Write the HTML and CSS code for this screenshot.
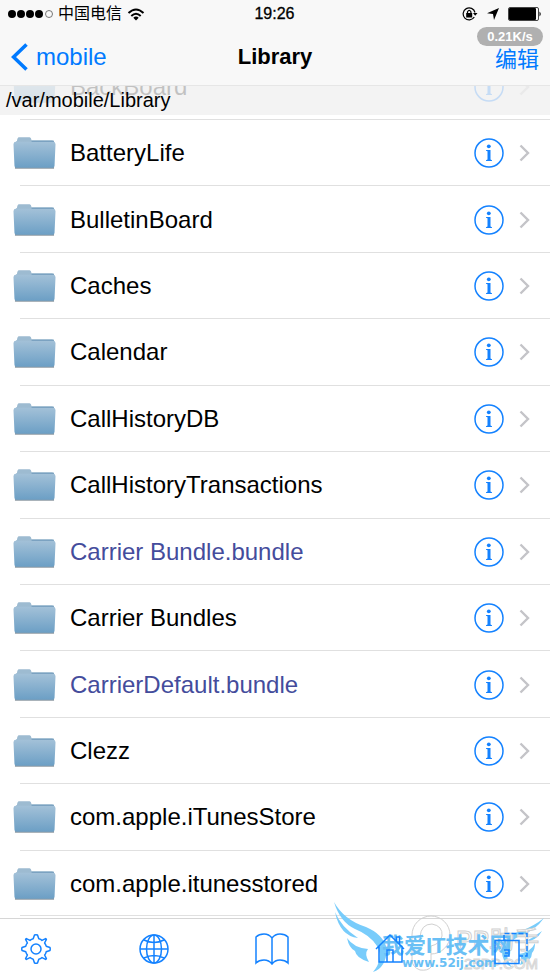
FILE: index.html
```
<!DOCTYPE html>
<html lang="zh-CN">
<head>
  <meta charset="UTF-8">
  <meta name="viewport" content="width=device-width, initial-scale=1">
  <title>Library</title>
  <link rel="stylesheet" href="styles.css">
</head>
<body>
  <!-- shared icons -->
  <svg class="defs" width="0" height="0" aria-hidden="true">
    <defs>
      <linearGradient id="folderFront" x1="0" y1="0" x2="0" y2="1">
        <stop offset="0" stop-color="#a3c1d8"/>
        <stop offset="1" stop-color="#6c9fc5"/>
      </linearGradient>
      <symbol id="folder" viewBox="0 0 44 34">
        <path d="M4 5 Q4.500 1 6 1 H17 Q18.500 1 19 4 H40 Q42 4 42 6 V12 H3 V5 Z" fill="#9dbbd1"/>
        <path d="M2 31 H42 V33 H2 Z" fill="#8e9aa3"/>
        <path d="M0.500 8 Q0.500 5.500 3 5.500 H41 Q43.500 5.500 43.500 8 L42.500 30 Q42.500 32 40.500 32 H3.500 Q1.500 32 1.500 30 Z" fill="url(#folderFront)"/>
        <path d="M19 5 H42" stroke="#6f9abb" stroke-width="1"/>
      </symbol>
      <symbol id="info" viewBox="0 0 30 30">
        <circle cx="15" cy="15" r="14" fill="none" stroke="#1482ff" stroke-width="1.500"/>
        <circle cx="14.800" cy="8.300" r="1.900" fill="#1482ff"/>
        <path d="M12 12 H16.500 V21.500 L18 22.200 V23 H12 V22.200 L13.500 21.500 V13.300 L12 12.800 Z" fill="#1482ff"/>
      </symbol>
      <symbol id="chevron" viewBox="0 0 11 18">
        <path d="M1.500 1.500 L9 9 L1.500 16.500" fill="none" stroke="#c4c4c8" stroke-width="2.400"/>
      </symbol>
    </defs>
  </svg>

  <header class="header">
    <div class="status">
      <div class="carrier">
        <svg width="46" height="10" viewBox="0 0 46 10">
          <g fill="#000">
            <circle cx="5" cy="5" r="4"/>
            <circle cx="14" cy="5" r="4"/>
            <circle cx="23" cy="5" r="4"/>
            <circle cx="32" cy="5" r="4"/>
          </g>
          <circle cx="42" cy="5" r="3.500" fill="none" stroke="#555" stroke-width="0.800"/>
        </svg>
        <span>中国电信</span>
        <svg width="18" height="13" viewBox="0 0 18 13">
          <path d="M1.500 5 Q9 -2 16.500 5 M4.300 8 Q9 3.600 13.700 8" fill="none" stroke="#000" stroke-width="2"/>
          <path d="M6.300 9.700 Q9 7.500 11.700 9.700 L9 12.500 Z"/>
        </svg>
      </div>
      <time class="clock">19:26</time>
      <div class="indicators">
        <svg width="16" height="14" viewBox="0 0 16 14">
          <path d="M12.300 10 A6 6 0 1 1 13 5.500" fill="none" stroke="#000" stroke-width="1.200"/>
          <path d="M11 6 H15.500 L13.200 8.800 Z"/>
          <rect x="4.200" y="6" width="6" height="4.500"/>
          <path d="M5.500 6.500 V4.800 Q7.200 2 8.900 4.800 V6.500" fill="none" stroke="#000" stroke-width="1.200"/>
        </svg>
        <svg width="12" height="12" viewBox="0 0 12 12">
          <path d="M12 0 L7 12 L6 6 L0 5.200 Z"/>
        </svg>
        <svg width="34" height="14" viewBox="0 0 34 14">
          <rect x="0.500" y="0.500" width="30" height="13" rx="1.500" fill="none" stroke="#444"/>
          <rect x="1" y="1" width="27" height="12" rx="1"/>
          <path d="M31.500 4.500 Q34 7 31.500 9.500 Z"/>
        </svg>
      </div>
    </div>
    <nav class="navbar">
      <a class="back" href="#">
        <svg width="17" height="28" viewBox="0 0 17 28">
          <path d="M15.500 1.500 L2.500 14 L15.500 26.500" fill="none" stroke="#007aff" stroke-width="3.600"/>
        </svg>
        <span>mobile</span>
      </a>
      <h1 class="title">Library</h1>
      <button class="edit" type="button">编辑</button>
    </nav>
    <span class="speed">0.21K/s</span>
  </header>

  <div class="path">
    <div class="under" aria-hidden="true">
      <svg class="folder"><use href="#folder"/></svg>
      <span class="name">BackBoard</span>
      <svg class="info-icon"><use href="#info"/></svg>
      <svg class="chevron"><use href="#chevron"/></svg>
    </div>
    <span class="path-text">/var/mobile/Library</span>
  </div>

  <ul class="list">
    <li class="row">
      <svg class="folder"><use href="#folder"/></svg>
      <a class="name" href="#">BatteryLife</a>
      <button class="info" type="button" aria-label="Info"><svg class="info-icon"><use href="#info"/></svg></button>
      <svg class="chevron"><use href="#chevron"/></svg>
    </li>
    <li class="row">
      <svg class="folder"><use href="#folder"/></svg>
      <a class="name" href="#">BulletinBoard</a>
      <button class="info" type="button" aria-label="Info"><svg class="info-icon"><use href="#info"/></svg></button>
      <svg class="chevron"><use href="#chevron"/></svg>
    </li>
    <li class="row">
      <svg class="folder"><use href="#folder"/></svg>
      <a class="name" href="#">Caches</a>
      <button class="info" type="button" aria-label="Info"><svg class="info-icon"><use href="#info"/></svg></button>
      <svg class="chevron"><use href="#chevron"/></svg>
    </li>
    <li class="row">
      <svg class="folder"><use href="#folder"/></svg>
      <a class="name" href="#">Calendar</a>
      <button class="info" type="button" aria-label="Info"><svg class="info-icon"><use href="#info"/></svg></button>
      <svg class="chevron"><use href="#chevron"/></svg>
    </li>
    <li class="row">
      <svg class="folder"><use href="#folder"/></svg>
      <a class="name" href="#">CallHistoryDB</a>
      <button class="info" type="button" aria-label="Info"><svg class="info-icon"><use href="#info"/></svg></button>
      <svg class="chevron"><use href="#chevron"/></svg>
    </li>
    <li class="row">
      <svg class="folder"><use href="#folder"/></svg>
      <a class="name" href="#">CallHistoryTransactions</a>
      <button class="info" type="button" aria-label="Info"><svg class="info-icon"><use href="#info"/></svg></button>
      <svg class="chevron"><use href="#chevron"/></svg>
    </li>
    <li class="row">
      <svg class="folder"><use href="#folder"/></svg>
      <a class="name bundle" href="#">Carrier Bundle.bundle</a>
      <button class="info" type="button" aria-label="Info"><svg class="info-icon"><use href="#info"/></svg></button>
      <svg class="chevron"><use href="#chevron"/></svg>
    </li>
    <li class="row">
      <svg class="folder"><use href="#folder"/></svg>
      <a class="name" href="#">Carrier Bundles</a>
      <button class="info" type="button" aria-label="Info"><svg class="info-icon"><use href="#info"/></svg></button>
      <svg class="chevron"><use href="#chevron"/></svg>
    </li>
    <li class="row">
      <svg class="folder"><use href="#folder"/></svg>
      <a class="name bundle" href="#">CarrierDefault.bundle</a>
      <button class="info" type="button" aria-label="Info"><svg class="info-icon"><use href="#info"/></svg></button>
      <svg class="chevron"><use href="#chevron"/></svg>
    </li>
    <li class="row">
      <svg class="folder"><use href="#folder"/></svg>
      <a class="name" href="#">Clezz</a>
      <button class="info" type="button" aria-label="Info"><svg class="info-icon"><use href="#info"/></svg></button>
      <svg class="chevron"><use href="#chevron"/></svg>
    </li>
    <li class="row">
      <svg class="folder"><use href="#folder"/></svg>
      <a class="name" href="#">com.apple.iTunesStore</a>
      <button class="info" type="button" aria-label="Info"><svg class="info-icon"><use href="#info"/></svg></button>
      <svg class="chevron"><use href="#chevron"/></svg>
    </li>
    <li class="row">
      <svg class="folder"><use href="#folder"/></svg>
      <a class="name" href="#">com.apple.itunesstored</a>
      <button class="info" type="button" aria-label="Info"><svg class="info-icon"><use href="#info"/></svg></button>
      <svg class="chevron"><use href="#chevron"/></svg>
    </li>
  </ul>

  <footer class="toolbar">
    <button class="tool" type="button" aria-label="Settings">
      <svg width="36" height="34" viewBox="-18 -17 36 34">
        <path d="M-1.500 -14 Q0 -14.500 1.500 -14 L2.800 -10.200 Q5 -9.700 6 -8.600 L9.600 -10.400 L10.400 -9.600 L8.600 -6 Q9.800 -4.500 10.200 -2.800 L14 -1.500 Q14.500 0 14 1.500 L10.200 2.800 Q9.700 5 8.600 6 L10.400 9.600 L9.600 10.400 L6 8.600 Q4.500 9.800 2.800 10.200 L1.500 14 Q0 14.500 -1.500 14 L-2.800 10.200 Q-5 9.700 -6 8.600 L-9.600 10.400 L-10.400 9.600 L-8.600 6 Q-9.800 4.500 -10.200 2.800 L-14 1.500 Q-14.500 0 -14 -1.500 L-10.200 -2.800 Q-9.700 -5 -8.600 -6 L-10.400 -9.600 L-9.600 -10.400 L-6 -8.600 Q-4.500 -9.800 -2.800 -10.200 Z" stroke-linejoin="round"/>
        <circle cx="0" cy="0" r="5"/>
      </svg>
    </button>
    <button class="tool" type="button" aria-label="Web">
      <svg width="36" height="34" viewBox="0 0 36 34">
        <circle cx="17" cy="17" r="14"/>
        <ellipse cx="17" cy="17" rx="7.500" ry="14"/>
        <path d="M3 17 H31 M17 3 V31 M7 8 Q17 13 27 8 M7 26 Q17 21 27 26"/>
      </svg>
    </button>
    <button class="tool" type="button" aria-label="Bookmarks">
      <svg width="36" height="34" viewBox="0 0 36 34">
        <path d="M17 6 Q14 2 9 2 Q4 2 1 5 V31 Q4 28 9 28 Q14 28 17 32 Q20 28 25 28 Q30 28 33 31 V5 Q30 2 25 2 Q20 2 17 6 V32"/>
      </svg>
    </button>
    <button class="tool" type="button" aria-label="Home">
      <svg width="36" height="34" viewBox="0 0 36 34">
        <path d="M2 17 L16 3 L30 17 M5 14 V30 H28 V14 M13 30 V18 H19 V30 M22.500 9 V5 H25.500 V12"/>
      </svg>
    </button>
    <button class="tool" type="button" aria-label="Windows">
      <svg width="36" height="34" viewBox="0 0 36 34">
        <path d="M3 8.500 H27 V31.500 H3 Z"/>
        <path d="M12 8 V1.500 H35 V24 H27" stroke-dasharray="5 2"/>
        <path d="M12 18 H17 V24 H12 M16 21 H13"/>
      </svg>
    </button>

    <div class="watermark" aria-hidden="true">
      <svg class="wings" viewBox="0 0 220 78">
        <g fill="none" stroke="#d0d0d0" stroke-width="1">
          <path d="M82 50 V35 A19 19 0 1 1 101 54 V67 Q98 71 90 70 Q82 67 82 60 Z"/>
          <path d="M90 37 Q91 24 102 24 Q113 26 112 36 Q110 44 101 46 V54"/>
        </g>
        <g fill="#78ccfb">
          <path d="M4 2 Q14 20 36 27 Q53 34 57 49 Q56 68 43 72 Q54 59 47 46 Q40 35 25 29 Q10 22 4 2 Z"/>
          <path d="M5 12 Q11 27 28 38 Q10 36 5 12 Z"/>
          <path d="M17 38 Q24 48 38 49 Q34 54 39 62 Q26 58 25 51 Q19 48 17 38 Z"/>
          <path d="M214 18 Q205 31 190 36 Q176 42 177 55 Q178 64 183 68 Q171 63 172 49 Q174 36 191 31 Q204 26 214 18 Z"/>
          <path d="M212 31 Q207 41 192 43 Q203 38 212 31 Z M205 43 Q201 52 189 54 Q193 59 190 65 Q202 61 202 53 Q205 50 205 43 Z"/>
        </g>
      </svg>
      <span class="mark-pp">PP助手</span>
      <span class="mark-pp-url">25PP.COM</span>
      <span class="mark-name">我爱IT技术网</span>
      <span class="mark-url">www.52ij.com</span>
    </div>
  </footer>
</body>
</html>
```
FILE: styles.css
```
* {
  box-sizing: border-box;
}

body {
  display: flex;
  flex-direction: column;
  min-height: 100vh;
  margin: 0;
  background: #fff;
  color: #000;
  font-family: "Liberation Sans", "Noto Sans CJK SC", sans-serif;
}

button {
  padding: 0;
  border: none;
  background: none;
  color: #007aff;
  font-family: inherit;
  cursor: pointer;
}

a {
  color: inherit;
  text-decoration: none;
}

svg {
  display: block;
  flex: none;
}

.defs {
  position: absolute;
}

/* status bar and title */
.header {
  position: relative;
  background: #f8f8f8;
  border-bottom: 1px solid #e6e6e6;
}

.status,
.navbar {
  display: grid;
  grid-template-columns: 1fr auto 1fr;
  align-items: center;
}

.status {
  height: 28px;
  padding: 0 8px 0 7px;
  font-size: 16px;
}

.carrier,
.indicators {
  display: flex;
  align-items: center;
  gap: 5px;
}

.carrier {
  line-height: 20px;
}

.clock {
  -webkit-text-stroke: 0.3px #000;
}

.indicators {
  justify-content: flex-end;
  gap: 9px;
}

.navbar {
  height: 57px;
  padding: 0 11px;
  font-size: 24px;
}

.back {
  display: flex;
  align-items: center;
  gap: 8px;
  color: #007aff;
}

.title {
  margin: 0;
  font-size: 22px;
  font-weight: bold;
}

.edit {
  justify-self: end;
  font-size: 22px;
}

.speed {
  position: absolute;
  top: 27px;
  right: 7px;
  width: 66px;
  border-radius: 10px;
  background: #b0b0b0;
  color: #fff;
  font-size: 13px;
  font-weight: bold;
  line-height: 19px;
  text-align: center;
}

/* current path, with the scrolled row showing through */
.path {
  position: relative;
  height: 29px;
  padding: 0 6px;
  overflow: hidden;
  background: #f3f3f3;
  font-size: 20px;
  line-height: 29px;
}

.path-text {
  position: relative;
}

.under {
  position: absolute;
  right: 0;
  bottom: -4px;
  left: 0;
  display: flex;
  align-items: center;
  height: 66px;
  padding: 2px 20px 0 13px;
  opacity: 0.2;
}

/* files */
.list {
  display: flex;
  flex: 1;
  flex-direction: column;
  margin: 4px 0 2px;
  padding: 0;
  list-style: none;
}

.row {
  position: relative;
  display: flex;
  flex: 1;
  align-items: center;
  min-height: 56px;
  padding: 2px 20px 0 13px;
}

.row::before,
.row:last-child::after {
  content: "";
  position: absolute;
  top: 0;
  right: 0;
  left: 20px;
  height: 1px;
  background: #e0e0e0;
}

.row:last-child::after {
  top: auto;
  bottom: 0;
}

.folder {
  width: 43px;
  height: 34px;
}

.name {
  flex: 1;
  margin-left: 14px;
  font-size: 24px;
  line-height: 32px;
}

.bundle {
  color: #444c9c;
}

.info-icon {
  width: 30px;
  height: 30px;
}

.chevron {
  width: 11px;
  height: 18px;
  margin-left: 15px;
}

/* bottom bar */
.toolbar {
  position: relative;
  display: flex;
  align-items: center;
  justify-content: space-between;
  height: 60px;
  padding: 0 22px 0 18px;
  border-top: 1px solid #d6d6d6;
}

.tool {
  position: relative;
  z-index: 1;
}

.tool svg {
  fill: none;
  stroke: #1482ff;
  stroke-width: 1.5;
}

.watermark {
  position: absolute;
  right: 0;
  bottom: 0;
  width: 220px;
  height: 78px;
  pointer-events: none;
  white-space: nowrap;
}

.watermark span {
  position: absolute;
}

.wings {
  width: 220px;
  height: 78px;
}

.watermark .mark-pp {
  top: 24px;
  left: 126px;
  color: #fff;
  font-size: 25px;
  line-height: 32px;
  -webkit-text-stroke: 1px #d0d0d0;
}

.watermark .mark-pp-url {
  right: 12px;
  bottom: 6px;
  color: #fff;
  font-size: 15px;
  line-height: 16px;
  -webkit-text-stroke: 1px #d8d8d8;
}

.watermark .mark-name {
  top: 32px;
  left: 52px;
  color: #69bff5;
  font-size: 22px;
  font-weight: bold;
  line-height: 28px;
}

.watermark .mark-url {
  top: 55px;
  left: 72px;
  color: #69bff5;
  font-family: "DejaVu Sans", sans-serif;
  font-size: 12px;
  font-weight: bold;
  line-height: 16px;
}
```
